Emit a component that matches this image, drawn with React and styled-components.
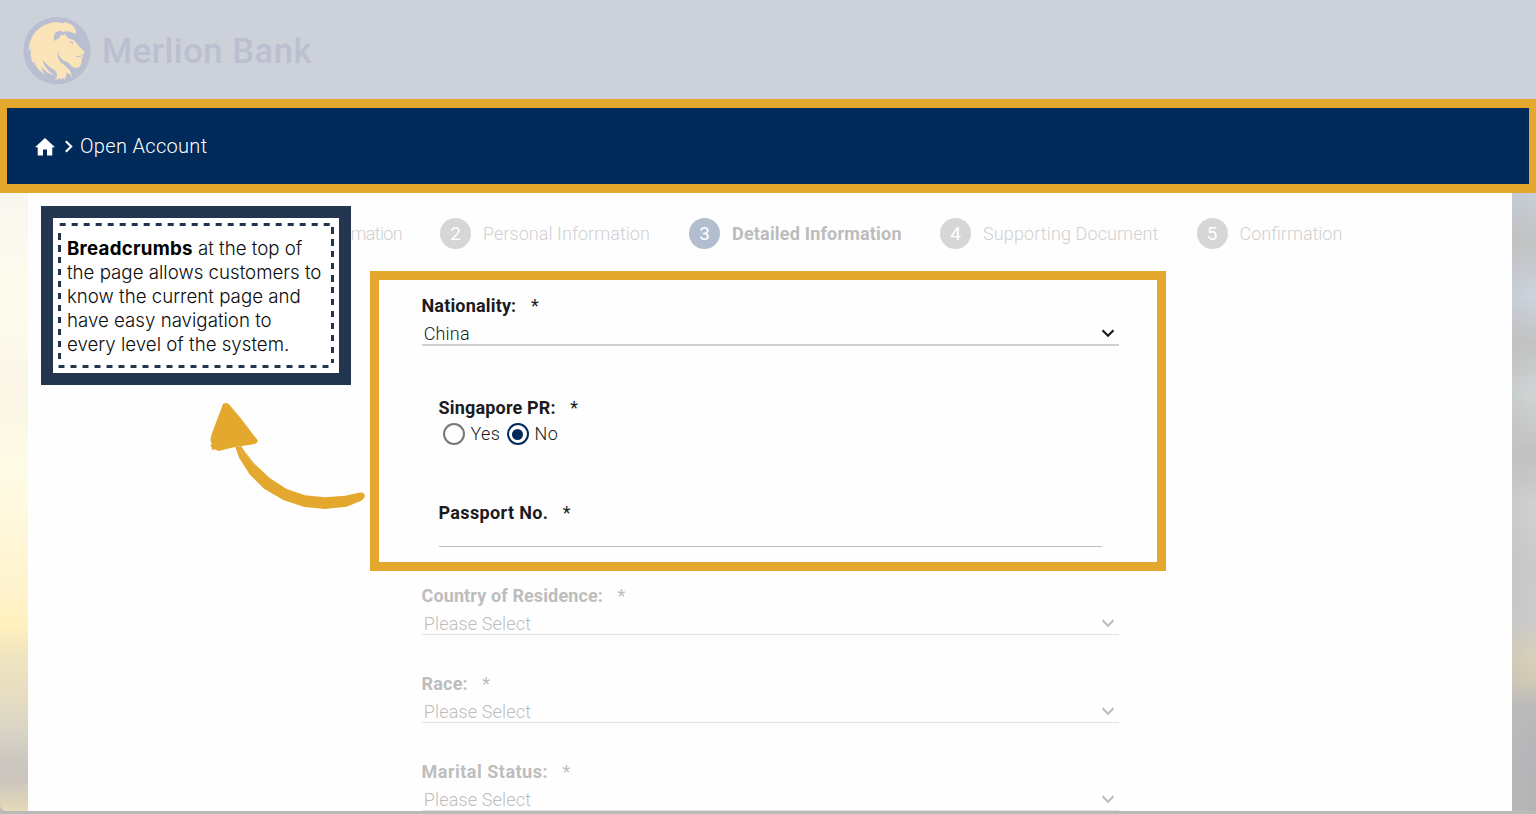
import React from "react";
import styled, { createGlobalStyle, css } from "styled-components";

const gold = "#e5a82f";
const navy = "#002a5a";

const GlobalStyle = createGlobalStyle`
  *, *::before, *::after { box-sizing: border-box; }
  body { margin: 0; overflow: hidden; font-family: Roboto, "Liberation Sans", sans-serif; }
`;

const Page = styled.div`
  position: relative;
  display: flex;
  flex-direction: column;
  height: 814px;
  overflow: hidden;
  background: #babbb8;
`;

const Header = styled.header`
  display: flex;
  align-items: center;
  gap: 8px;
  flex: 0 0 99px;
  padding: 3px 0 0 20px;
  background: #cdd1d9;
`;

const BankName = styled.span`
  font-size: 34.5px;
  font-weight: 500;
  line-height: 40px;
  letter-spacing: 0.55px;
  color: #bbbfd0;
`;

const BreadcrumbBar = styled.nav`
  display: flex;
  align-items: center;
  flex: 0 0 94px;
  padding: 1px 0 0 28px;
  border: solid ${gold};
  border-width: 9px 7px;
  background: ${navy};
  color: #fff;
`;

const Crumb = styled.span`
  margin-left: 6px;
  padding-bottom: 2px;
  font-size: 20px;
  font-weight: 300;
  line-height: 24px;
  letter-spacing: 0.32px;
`;

const CrumbArrow = styled.svg`
  margin-left: 9px;
`;

const Main = styled.main`
  display: flex;
  flex: 1;
  padding-bottom: 3px;
`;

const Scenery = styled.div`
  flex: 0 0 ${p => p.$width}px;
  border-radius: ${p => (p.$left ? "0 0 0 6px" : "0")};
  background: ${p =>
    p.$left
      ? css`linear-gradient(#f8f6ef 0, #fdfbee 75px, #fdfbee 125px, #fbf6e6 195px, #fefbe6 275px, #fff8da 335px, #fff3cd 400px, #fff0bd 432px, #f1e5c0 460px, #e7ddc0 500px, #dad5c6 535px, #cbc7c0 570px, #cbc5bd 587px, #e6dab9 618px)`
      : css`linear-gradient(90deg, rgba(190,190,190,.3), rgba(255,255,255,0)), linear-gradient(#c8d0da 0, #c1c3c4 48px, #cdd4de 104px, #c1c2c2 150px, #cfd5d5 201px, #c1c1bf 262px, #d0d1d0 312px, #cacaca 370px, #cdccca 430px, #d9d0b6 465px, #d2cab5 488px, #bababa 512px, #b3b5b8 570px, #b4b4b3 618px)`};
`;

const Card = styled.section`
  display: flex;
  flex-direction: column;
  flex: 1;
  height: 618px;
  overflow: hidden;
  background: #fefefe;
`;

const Stepper = styled.ol`
  display: flex;
  align-items: center;
  gap: 38.5px;
  flex: 0 0 78px;
  margin: 0;
  padding: 3px 0 0 322.5px;
  list-style: none;
`;

const Step = styled.li`
  display: flex;
  align-items: center;
  gap: 12px;
  flex: 0 0 ${p => p.$width}px;
  min-width: 0;
`;

const StepNumber = styled.span`
  display: grid;
  place-items: center;
  flex: 0 0 31px;
  height: 31px;
  border-radius: 50%;
  background: ${p => (p.$active ? "#b2bdcf" : "#d6d6d6")};
  color: #fff;
  font-size: 19px;
  line-height: 31px;
`;

const StepLabel = styled.span`
  font-size: 18px;
  font-weight: ${p => (p.$active ? 700 : 300)};
  line-height: 24px;
  letter-spacing: ${p => p.$track || 0}px;
  white-space: nowrap;
  color: ${p => (p.$active ? "#bcbcbc" : "#d0d0d0")};
`;

const Highlight = styled.div`
  display: flex;
  flex-direction: column;
  flex: 0 0 300px;
  width: 796px;
  margin-left: 342px;
  padding: 14px 38.5px 0 42.5px;
  border: 9px solid ${gold};
`;

const FadedFields = styled.div`
  display: flex;
  flex-direction: column;
  flex: none;
  width: 697px;
  margin: 13px 0 0 393.5px;
`;

const Field = styled.div`
  display: flex;
  flex-direction: column;
  flex: 0 0 ${p => p.$height}px;
  padding: 0 ${p => (p.$nested ? 17 : 0)}px;
  color: ${p => (p.$faded ? "#bdbdbd" : "#1b1b1d")};
`;

const FieldLabel = styled.div`
  display: flex;
  gap: 14.5px;
  font-size: 18px;
  font-weight: 700;
  line-height: 24px;
  letter-spacing: ${p => p.$track}px;
`;

const Required = styled.span`
  font-weight: 400;
`;

const Select = styled.div`
  display: flex;
  align-items: center;
  justify-content: space-between;
  height: ${p => (p.$faded ? 27 : 28)}px;
  padding: 5px 3.8px 0 2.2px;
  border-bottom: ${p => (p.$faded ? "1px solid #e2e2e2" : "2px solid #d0d0d0")};
  font-size: 18px;
  font-weight: 300;
  line-height: 24px;
  letter-spacing: 0.17px;
`;

const RadioRow = styled.div`
  display: flex;
  align-items: center;
  gap: 6px;
  height: 28px;
  padding-left: 4px;
`;

const Radio = styled.span`
  display: grid;
  place-items: center;
  width: 22px;
  height: 22px;
  border: 2.5px solid ${p => (p.$checked ? navy : "#777")};
  border-radius: 50%;

  &::after {
    content: "";
    width: 11px;
    height: 11px;
    border-radius: 50%;
    background: ${p => (p.$checked ? navy : "transparent")};
  }
`;

const RadioLabel = styled.span`
  width: 30px;
  font-size: 18px;
  font-weight: 300;
  line-height: 24px;
  letter-spacing: 0.35px;
`;

const TextInput = styled.div`
  height: 22px;
  border-bottom: 1.5px solid #bfbfbf;
`;

const Callout = styled.aside`
  position: absolute;
  left: 41px;
  top: 206px;
  width: 310px;
  height: 179px;
  padding: 5px;
  border: 12px solid #24364f;
  background: #fff;
`;

const dashX = "repeating-linear-gradient(90deg, #24364f 0 6px, transparent 6px 12px)";
const dashY = "repeating-linear-gradient(#24364f 0 6.5px, transparent 6.5px 12px)";

const Stitching = styled.div`
  height: 145px;
  padding: 14px 0 0 9px;
  background:
    ${dashX} 1.7px 0 / 100% 3px repeat-x,
    ${dashX} 0.5px 100% / 100% 3px repeat-x,
    ${dashY} 0 9.5px / 3px 132px no-repeat,
    ${dashY} 100% 4px / 3px 136px no-repeat;
`;

const CalloutText = styled.p`
  margin: 0;
  font-family: Inter, "Liberation Sans", sans-serif;
  font-size: 18.7px;
  font-weight: 300;
  line-height: 24px;
  white-space: nowrap;
  color: #0c0c0c;
`;

const Term = styled.strong`
  font-weight: 700;
  letter-spacing: 0.25px;
  color: #000;
`;

const ArrowDrawing = styled.svg`
  position: absolute;
  left: 190px;
  top: 390px;
`;

function LionLogo() {
  return (
    <svg width="74" height="74" viewBox="0 0 222 222">
      <circle cx="111" cy="110" r="101" fill="#b9bed0" />
      <path
        fill="#fbe5b8"
        d="M26 112C26 82 40 56 62 40C80 26 110 20 128 28L134 25C152 28 164 38 168 52L166 61C154 52 142 50 132 53L128 57C136 60 141 66 144 73C150 76 158 74 165 82L172 91L184 104L194 113L192 119L184 123C189 124 191 127 189 130L183 134L187 138L184 143C184 153 180 158 171 162C158 162 144 154 130 150C144 163 157 172 156 192C154 184 147 178 139 175C141 185 136 191 132 198L130 190L123 199L122 192L105 198C114 188 112 178 106 170C92 160 78 152 68 137C72 160 86 173 105 184C88 180 74 171 64 158C65 169 70 175 76 182C58 172 48 160 42 140L40 151C32 134 30 119 33 103Z"
      />
      <g fill="#b9bed0">
        <path d="M104 82C99 66 103 53 116 51C127 49 135 56 133 64C124 61 118 64 117 74C111 74 107 77 104 82Z" />
        <path d="M115 108C113 122 121 134 134 141C148 146 158 157 162 172L154 186C155 170 143 160 130 151C117 143 109 128 115 108Z" />
        <path d="M145 82L160 90L159 83Z" />
      </g>
      <path d="M170 128L184 126" fill="none" stroke="#b9bed0" strokeWidth="3" strokeLinecap="round" />
    </svg>
  );
}

function Chevron() {
  return (
    <svg width="14" height="10" viewBox="0 0 14 10">
      <path d="M1.5 1.2L7 6.7L12.5 1.2" fill="none" stroke="currentColor" strokeWidth="2.1" />
    </svg>
  );
}

const steps = [
  { label: "mation", width: 51, track: -0.65 },
  { number: 2, label: "Personal Information", width: 210.5, track: 0.06 },
  { number: 3, label: "Detailed Information", width: 212.5, track: 0.19, active: true },
  { number: 4, label: "Supporting Document", width: 218, track: 0.12 },
  { number: 5, label: "Confirmation", width: 150 },
];

const selects = [
  { label: "Country of Residence:", track: 0.12 },
  { label: "Race:", track: 0.2 },
  { label: "Marital Status:", track: 0.5 },
];

function Label({ children, track }) {
  return (
    <FieldLabel $track={track}>
      {children}
      <Required>*</Required>
    </FieldLabel>
  );
}

export default function App() {
  return (
    <Page>
      <GlobalStyle />
      <Header>
        <LionLogo />
        <BankName>Merlion Bank</BankName>
      </Header>
      <BreadcrumbBar>
        <svg width="20" height="18" viewBox="0 0 20 18">
          <path fill="#fff" d="M10 0L0 9.2H2.7V17.4H8V11.4H12V17.4H17.3V9.2H20Z" />
        </svg>
        <CrumbArrow width="10" height="13" viewBox="0 0 10 13">
          <path d="M1.8 1.2L7.2 6.5L1.8 11.8" fill="none" stroke="#fff" strokeWidth="2.1" />
        </CrumbArrow>
        <Crumb>Open Account</Crumb>
      </BreadcrumbBar>
      <Main>
        <Scenery $left $width={28} />
        <Card>
          <Stepper>
            {steps.map(s => (
              <Step key={s.label} $width={s.width}>
                {s.number && <StepNumber $active={s.active}>{s.number}</StepNumber>}
                <StepLabel $active={s.active} $track={s.track}>{s.label}</StepLabel>
              </Step>
            ))}
          </Stepper>
          <Highlight>
            <Field $height={102}>
              <Label track={0.17}>Nationality:</Label>
              <Select>China<Chevron /></Select>
            </Field>
            <Field $height={105} $nested>
              <Label track={0.18}>Singapore PR:</Label>
              <RadioRow>
                <Radio />
                <RadioLabel>Yes</RadioLabel>
                <Radio $checked />
                <RadioLabel>No</RadioLabel>
              </RadioRow>
            </Field>
            <Field $height={60} $nested>
              <Label track={0.35}>Passport No.</Label>
              <TextInput />
            </Field>
          </Highlight>
          <FadedFields>
            {selects.map(s => (
              <Field key={s.label} $height={88} $faded>
                <Label track={s.track}>{s.label}</Label>
                <Select $faded>Please Select<Chevron /></Select>
              </Field>
            ))}
          </FadedFields>
        </Card>
        <Scenery $width={24} />
      </Main>
      <Callout>
        <Stitching>
          <CalloutText>
            <Term>Breadcrumbs</Term> at the top of<br />
            the page allows customers to<br />
            know the current page and<br />
            have easy navigation to<br />
            every level of the system.
          </CalloutText>
        </Stitching>
      </Callout>
      <ArrowDrawing width="180" height="125" viewBox="0 0 540 375">
        <g fill={gold}>
          <path d="M99 42Q108 36 116 42L150 82L203 151Q204 159 190 163L135 171L86 183L74 178L65 181L66 172L61 169L65 161L61 150Q64 132 74 108Z" />
          <path d="M136 172L153 168L166 187L192 220L240 265L290 297L345 316L405 322L466 317L506 308Q522 305 525 317Q522 330 503 337L470 350L405 357L343 351L280 330L222 296L178 252L148 205Z" />
        </g>
        <path d="M158 182L198 232M149 177L158 200" fill="none" stroke="#fff" strokeWidth="1" opacity=".5" />
      </ArrowDrawing>
    </Page>
  );
}
